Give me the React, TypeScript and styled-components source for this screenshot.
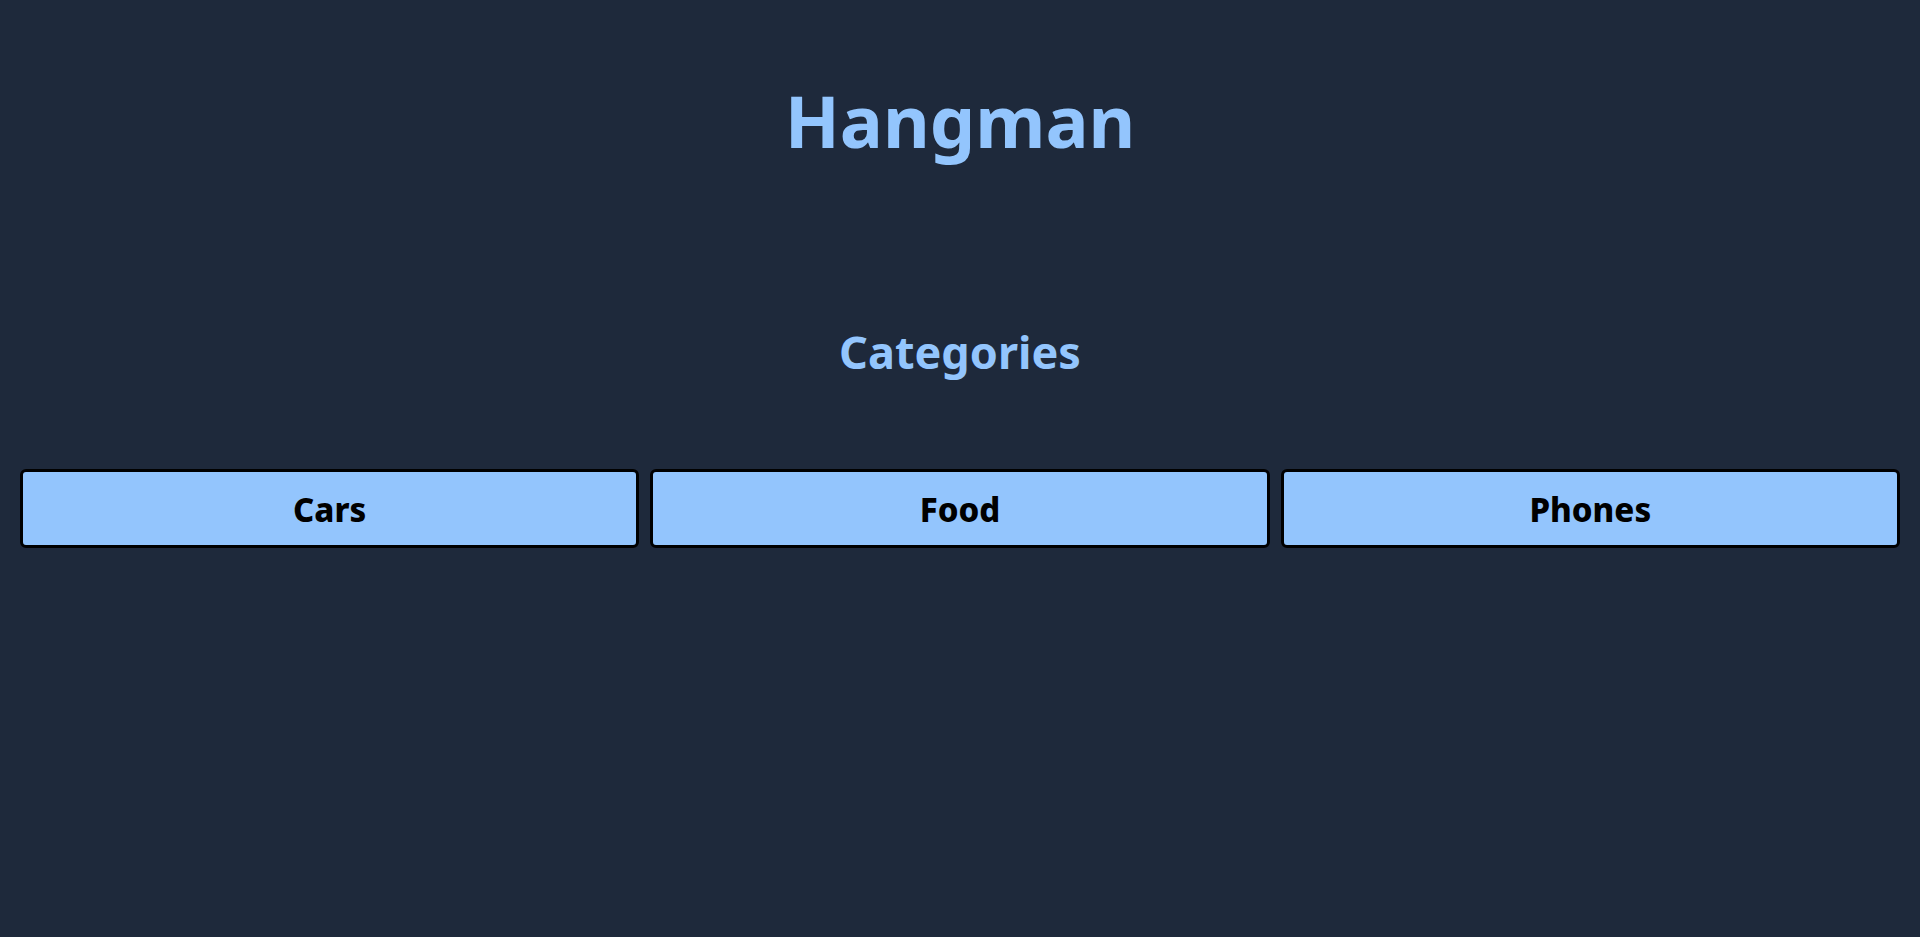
import styled, { createGlobalStyle } from 'styled-components'

const GlobalStyle = createGlobalStyle`
  html, body {
    margin: 0;
    padding: 0;
    background: #1e293b;
    font-family: 'Noto Sans', 'Open Sans', sans-serif;
  }
`

const Page = styled.div`
  min-height: 937px;
  padding: 0 20px;
  box-sizing: border-box;
  display: flex;
  flex-direction: column;
  align-items: center;
`

const Title = styled.h1`
  margin: 77px 0 0;
  font-size: 72px;
  font-weight: 700;
  color: #93c5fd;
  line-height: 1.2;
`

const Subtitle = styled.h2`
  margin: 162px 0 0;
  font-size: 45px;
  font-weight: 700;
  color: #93c5fd;
  line-height: 1.2;
`

const Buttons = styled.div`
  margin-top: 90px;
  width: 100%;
  display: grid;
  grid-template-columns: repeat(3, 1fr);
  gap: 11px;
`

const CategoryButton = styled.button`
  height: 79px;
  padding-top: 3px;
  background: #93c5fd;
  border: 3px solid #000;
  border-radius: 6px;
  font-family: inherit;
  font-size: 33px;
  font-weight: 800;
  color: #000;
  cursor: pointer;
`

const App = () => {
  const categories = ['Cars', 'Food', 'Phones']
  return (
    <>
      <GlobalStyle />
      <Page>
        <Title>Hangman</Title>
        <Subtitle>Categories</Subtitle>
        <Buttons>
          {categories.map((name) => (
            <CategoryButton key={name}>{name}</CategoryButton>
          ))}
        </Buttons>
      </Page>
    </>
  )
}

export default App
